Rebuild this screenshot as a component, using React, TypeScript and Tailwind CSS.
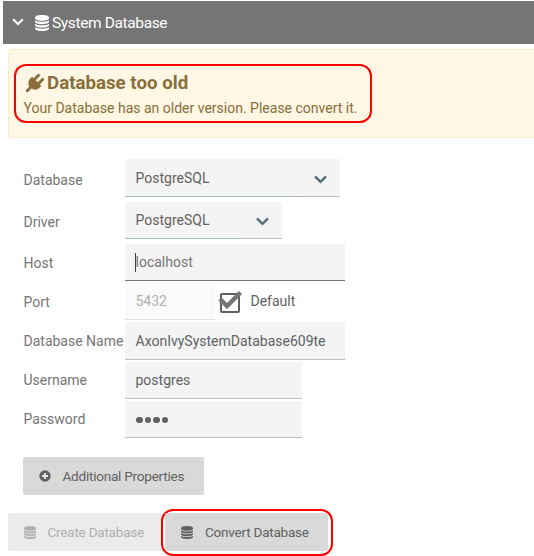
import type { ReactNode } from "react";

function DatabaseIcon({ className }: { className: string }) {
  return (
    <svg viewBox="0 0 1536 1792" preserveAspectRatio="none" fill="currentColor" className={className}>
      <path d="M768 768q237 0 443-43t325-127v170q0 69-103 128t-280 93.5-385 34.5-385-34.5-280-93.5-103-128v-170q119 84 325 127t443 43zm0 768q237 0 443-43t325-127v170q0 69-103 128t-280 93.5-385 34.5-385-34.5-280-93.5-103-128v-170q119 84 325 127t443 43zm0-384q237 0 443-43t325-127v170q0 69-103 128t-280 93.5-385 34.5-385-34.5-280-93.5-103-128v-170q119 84 325 127t443 43zm0-1152q208 0 385 34.5t280 93.5 103 128v128q0 69-103 128t-280 93.5-385 34.5-385-34.5-280-93.5-103-128v-128q0-69 103-128t280-93.5 385-34.5z" />
    </svg>
  );
}

function PlugIcon() {
  return (
    <svg viewBox="0 0 1792 1792" fill="currentColor" stroke="currentColor" strokeWidth="50" className="-mt-px h-[18px] w-[18px] shrink-0">
      <path d="M1755 453q37 38 37 90.5t-37 90.5l-401 400 150 150-160 160q-163 163-389.5 186.5t-411.5-100.5l-362 362h-181v-181l362-362q-124-185-100.5-411.5t186.5-389.5l160-160 150 150 400-401q38-37 91-37t90 37 37 90.5-37 90.5l-400 401 234 234 401-400q38-37 91-37t90 37z" />
    </svg>
  );
}

function Chevron({ className }: { className: string }) {
  return (
    <svg viewBox="0 0 13 9" fill="none" stroke="currentColor" strokeWidth="2.4" className={className}>
      <path d="M1 1.3 6.5 6.8 12 1.3" />
    </svg>
  );
}

function Row({ label, className, labelClass = "pb-px", children }: { label: string; className: string; labelClass?: string; children: ReactNode }) {
  return (
    <div className={`flex ${className}`}>
      <div className={`flex w-[102px] shrink-0 items-center whitespace-nowrap pl-[0.5px] text-[#757575] ${labelClass}`}>{label}</div>
      {children}
    </div>
  );
}

function Select({ value, className }: { value: string; className: string }) {
  return (
    <div className={`relative flex items-center justify-between border-b border-[#bdbdbd] bg-[#f4f4f4] pr-[13px] pl-[10.5px] ${className}`}>
      <span>{value}</span>
      <Chevron className="mt-[3px] h-[9px] w-[13px] text-[#546e7a]" />
      <span className="absolute right-10 -bottom-px left-0 h-px bg-[#a7bcc4]" />
    </div>
  );
}

export default function App() {
  return (
    <div className="h-[556px] w-[534px] overflow-hidden bg-white pt-px font-[Roboto,sans-serif] text-[14px] leading-5 text-[#616161]">
      <header className="ml-[3px] flex h-[43px] items-center bg-[#757575] pl-[9px] text-[15.5px] tracking-[-0.37px] text-white">
        <Chevron className="mb-px h-[8px] w-[12px]" />
        <DatabaseIcon className="mt-px ml-[11px] h-[16px] w-[14px]" />
        <span className="ml-[3px]">System Database</span>
      </header>

      <section className="mt-[5px] ml-2 h-[89px] rounded-l border border-r-0 border-[#faebcc] bg-[#fdf7e3] pt-[14px] pl-[5px] text-[#8a6d3b]">
        <div className="h-[59px] w-[358px] rounded-[12px] border-2 border-[#ff0000] pt-[5px] pl-[7.5px]">
          <div className="flex h-[24px] items-center gap-[3px] pl-[2.5px] text-[18.7px] font-bold">
            <PlugIcon />
            <span>Database too old</span>
          </div>
          <div className="mt-[3px] whitespace-nowrap">Your Database has an older version. Please convert it.</div>
        </div>
      </section>

      <form className="mt-[21px] pl-[23px]">
        <Row label="Database" className="h-[38px]" labelClass="pt-[4px]">
          <Select value="PostgreSQL" className="w-[215px]" />
        </Row>
        <Row label="Driver" className="mt-[5px] h-[37px]" labelClass="pt-[2px]">
          <Select value="PostgreSQL" className="w-[157px]" />
        </Row>
        <Row label="Host" className="mt-[5px] h-[37px]" labelClass="pt-px">
          <div className="flex w-[220px] items-center border-b border-[#757575] bg-[#f4f4f4] pl-[10px] text-[#757575]">
            <span className="h-[19px] w-px bg-[#424242]" />
            <span className="-ml-px pl-[0.5px]">localhost</span>
          </div>
        </Row>
        <Row label="Port" className="mt-[2px] h-[37px]" labelClass="pt-px">
          <div className="flex w-[90px] items-center border-b border-[#e0e0e0] bg-[#fafafa] pl-[10.5px] text-[#b0b0b0]">5432</div>
          <div className="flex items-center">
            <svg viewBox="0 0 25 24" className="mt-px ml-[3px] h-[24px] w-[25px]">
              <rect x="3" y="4" width="18" height="18" rx="1" fill="none" stroke="#616161" strokeWidth="2" />
              <path d="m2 9 7 7L22.5 2.5" fill="none" stroke="#757575" strokeWidth="4.5" />
            </svg>
            <span className="-mt-px ml-[7.5px]">Default</span>
          </div>
        </Row>
        <Row label="Database Name" className="mt-[2px] h-[38px]">
          <div className="flex w-[220px] items-center border-b border-[#bdbdbd] bg-[#f4f4f4] pl-[10.5px]">AxonIvySystemDatabase609te</div>
        </Row>
        <Row label="Username" className="mt-[2px] h-[37px]">
          <div className="flex w-[177px] items-center border-b border-[#bdbdbd] bg-[#f4f4f4] pl-[10.5px]">postgres</div>
        </Row>
        <Row label="Password" className="mt-[2px] h-[37px]">
          <div className="flex w-[177px] items-center gap-[2px] border-b border-[#bdbdbd] bg-[#f4f4f4] pl-[11px]">
            {[0, 1, 2, 3].map((dot) => (
              <span key={dot} className="mt-[2px] h-[6.5px] w-[6.5px] rounded-full bg-[#616161]" />
            ))}
          </div>
        </Row>
      </form>

      <button className="mt-[19px] ml-[23px] flex h-[38px] w-[181px] items-center rounded-[2px] bg-[#d9d9d9] pl-[16px] text-[13.6px] tracking-[-0.26px]">
        <svg viewBox="0 0 12 12" className="h-[12px] w-[12px]">
          <circle cx="6" cy="6" r="5.7" fill="currentColor" />
          <path d="M6 3v6M3 6h6" stroke="#e8e8e8" strokeWidth="1.8" />
        </svg>
        <span className="ml-[11.5px]">Additional Properties</span>
      </button>

      <div className="mt-[14px] flex pl-2 text-[13.6px] tracking-[-0.26px]">
        <button className="mt-1 flex h-[38px] w-[153px] items-center rounded-l-[2px] bg-[#ebebeb] pl-[16px] text-[#b0b0b0]">
          <DatabaseIcon className="mt-px h-[13px] w-[12px]" />
          <span className="ml-[11.5px]">Create Database</span>
        </button>
        <div className="h-[47px] w-[172px] rounded-[12px] border-2 border-[#ff0000] pt-[2px] pl-[2px]">
          <button className="flex h-[38px] w-[163px] items-center rounded-[2px] bg-[#d9d9d9] pl-[16px]">
            <DatabaseIcon className="mt-px h-[13px] w-[12px]" />
            <span className="ml-[12px]">Convert Database</span>
          </button>
        </div>
      </div>
    </div>
  );
}
